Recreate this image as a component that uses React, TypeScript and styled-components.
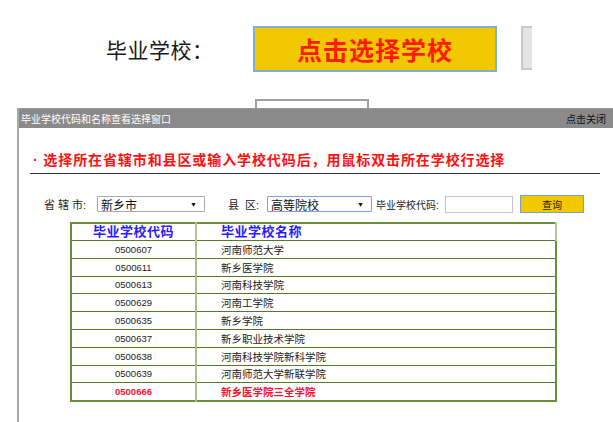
import React from 'react'
import styled, { createGlobalStyle } from 'styled-components'

const GlobalStyle = createGlobalStyle`
    html, body {
        margin: 0;
        padding: 0;
        background: #ffffff;
        overflow: hidden;
    }
    body {
        font-family: 'Liberation Sans', 'Noto Sans CJK SC', sans-serif;
        width: 613px;
        height: 422px;
        position: relative;
    }
`

const cjk = `'Liberation Sans', 'Noto Sans CJK SC', sans-serif`

const Page = styled.div`
    position: relative;
    width: 613px;
    height: 422px;
    overflow: hidden;
`

const FormRow = styled.div`
    display: flex;
    align-items: center;
    padding: 26px 0 0 106px;
    height: 46px;
`

const FieldLabel = styled.span`
    font-family: ${cjk};
    font-size: 21px;
    letter-spacing: 0.5px;
    color: #1a1a1a;
    width: 147px;
`

const PickButton = styled.div`
    box-sizing: border-box;
    width: 244px;
    height: 46px;
    background: #f2c800;
    border: 2px solid #7fb0d4;
    display: flex;
    align-items: center;
    justify-content: center;
    font-family: ${cjk};
    font-size: 25px;
    font-weight: 700;
    color: #ff1a00;
    letter-spacing: 1px;
`

const GreyStub = styled.div`
    box-sizing: border-box;
    width: 11px;
    height: 44px;
    margin-left: 24px;
    align-self: flex-start;
    background: #e4e4e4;
    border: 2px solid #c9c9c9;
    border-right: none;
`

const HiddenInput = styled.div`
    box-sizing: border-box;
    margin: 27px 0 0 255px;
    width: 114px;
    height: 30px;
    border: 2px solid #a0a0a0;
`

const Dialog = styled.div`
    position: absolute;
    top: 108px;
    left: 17px;
    width: 596px;
    height: 320px;
    background: #ffffff;
    border-left: 2px solid #a8a8a8;
    box-sizing: border-box;
`

const DialogHeader = styled.div`
    height: 20px;
    background: #8a8a8a;
    border-top: 1px solid #9c9c9c;
    box-sizing: border-box;
    display: flex;
    align-items: center;
    justify-content: space-between;
    padding: 0 7px 0 2px;
    font-family: ${cjk};
    font-size: 10px;
`

const HeaderTitle = styled.span`
    color: #ffffff;
`

const CloseLink = styled.span`
    color: #111111;
`

const Notice = styled.div`
    margin: 24px 13px 0 11px;
    padding: 0 0 5px 3px;
    border-bottom: 1px solid #333333;
    font-family: ${cjk};
    font-size: 14px;
    line-height: 16px;
    font-weight: 700;
    letter-spacing: 0.9px;
    color: #ff1010;
`

const FilterRow = styled.div`
    display: flex;
    align-items: center;
    margin: 21px 0 0 25px;
    height: 18px;
    font-family: ${cjk};
    font-size: 11px;
    color: #222222;
`

const FilterLabel = styled.span<{ $gap?: number; $w: number; $small?: boolean }>`
    margin-left: ${({ $gap }) => $gap ?? 0}px;
    width: ${({ $w }) => $w}px;
    font-size: ${({ $small }) => ($small ? 10 : 11)}px;
    flex: none;
    white-space: pre;
`

const SelectBox = styled.div<{ $w: number; $focus?: boolean }>`
    box-sizing: border-box;
    width: ${({ $w }) => $w}px;
    height: 16px;
    border: 1px solid ${({ $focus }) => ($focus ? '#7f9dd6' : '#a9a9a9')};
    border-radius: 1px;
    display: flex;
    align-items: center;
    justify-content: space-between;
    padding: 0 7px 0 3px;
    font-size: 12px;
    color: #111111;
`

const Caret = styled.span`
    font-size: 7px;
    color: #111111;
`

const CodeInput = styled.div`
    box-sizing: border-box;
    width: 68px;
    height: 17px;
    border: 1px solid #c4c4c4;
`

const QueryButton = styled.div`
    box-sizing: border-box;
    margin-left: 7px;
    width: 64px;
    height: 18px;
    background: #f2c800;
    border: 1px solid #7aa3bd;
    display: flex;
    align-items: center;
    justify-content: center;
    font-size: 10px;
    color: #222222;
`

const SchoolTable = styled.table`
    margin: 9px 0 0 51px;
    width: 487px;
    border-collapse: collapse;
    border: 2px solid #6a8f3a;
    font-family: ${cjk};
`

const HeadCell = styled.th<{ $align: 'center' | 'left' }>`
    height: 16px;
    padding: 0 0 0 ${({ $align }) => ($align === 'left' ? 24 : 0)}px;
    text-align: ${({ $align }) => $align};
    font-size: 13px;
    font-weight: 700;
    letter-spacing: 0.5px;
    color: #2a1bff;
    border-right: 2px solid #b3c79a;
    border-bottom: 1px solid #55792a;
    line-height: 16px;
`

const Row = styled.tr<{ $hot?: boolean }>`
    color: ${({ $hot }) => ($hot ? '#ff1030' : '#222222')};
    font-weight: ${({ $hot }) => ($hot ? 700 : 400)};
`

const CodeCell = styled.td`
    width: 123px;
    height: 16.8px;
    padding: 0;
    text-align: center;
    font-family: 'Liberation Sans', sans-serif;
    font-size: 9.5px;
    border-right: 2px solid #a9c08c;
    border-top: 1px solid #c2d4aa;
    border-bottom: 1px solid #55792a;
`

const NameCell = styled.td`
    height: 16.8px;
    padding: 0 0 0 24px;
    font-size: 10.5px;
    border-top: 1px solid #c2d4aa;
    border-bottom: 1px solid #55792a;
`

const schools = [
    { code: '0500607', name: '河南师范大学' },
    { code: '0500611', name: '新乡医学院' },
    { code: '0500613', name: '河南科技学院' },
    { code: '0500629', name: '河南工学院' },
    { code: '0500635', name: '新乡学院' },
    { code: '0500637', name: '新乡职业技术学院' },
    { code: '0500638', name: '河南科技学院新科学院' },
    { code: '0500639', name: '河南师范大学新联学院' },
    { code: '0500666', name: '新乡医学院三全学院', hot: true },
]

export default function App() {
    return (
        <Page>
            <GlobalStyle />
            <FormRow>
                <FieldLabel>毕业学校：</FieldLabel>
                <PickButton>点击选择学校</PickButton>
                <GreyStub />
            </FormRow>
            <HiddenInput />

            <Dialog>
                <DialogHeader>
                    <HeaderTitle>毕业学校代码和名称查看选择窗口</HeaderTitle>
                    <CloseLink>点击关闭</CloseLink>
                </DialogHeader>
                <Notice>
                    · 选择所在省辖市和县区或输入学校代码后，用鼠标双击所在学校行选择
                </Notice>
                <FilterRow>
                    <FilterLabel $w={53}>省 辖 市:</FilterLabel>
                    <SelectBox $w={108}>
                        新乡市<Caret>▼</Caret>
                    </SelectBox>
                    <FilterLabel $gap={23} $w={39}>县  区:</FilterLabel>
                    <SelectBox $w={105} $focus>
                        高等院校<Caret>▼</Caret>
                    </SelectBox>
                    <FilterLabel $gap={4} $w={69} $small>毕业学校代码:</FilterLabel>
                    <CodeInput />
                    <QueryButton>查询</QueryButton>
                </FilterRow>
                <SchoolTable>
                    <thead>
                        <tr>
                            <HeadCell $align="center">毕业学校代码</HeadCell>
                            <HeadCell $align="left">毕业学校名称</HeadCell>
                        </tr>
                    </thead>
                    <tbody>
                        {schools.map((s) => (
                            <Row key={s.code} $hot={s.hot}>
                                <CodeCell>{s.code}</CodeCell>
                                <NameCell>{s.name}</NameCell>
                            </Row>
                        ))}
                    </tbody>
                </SchoolTable>
            </Dialog>
        </Page>
    )
}
